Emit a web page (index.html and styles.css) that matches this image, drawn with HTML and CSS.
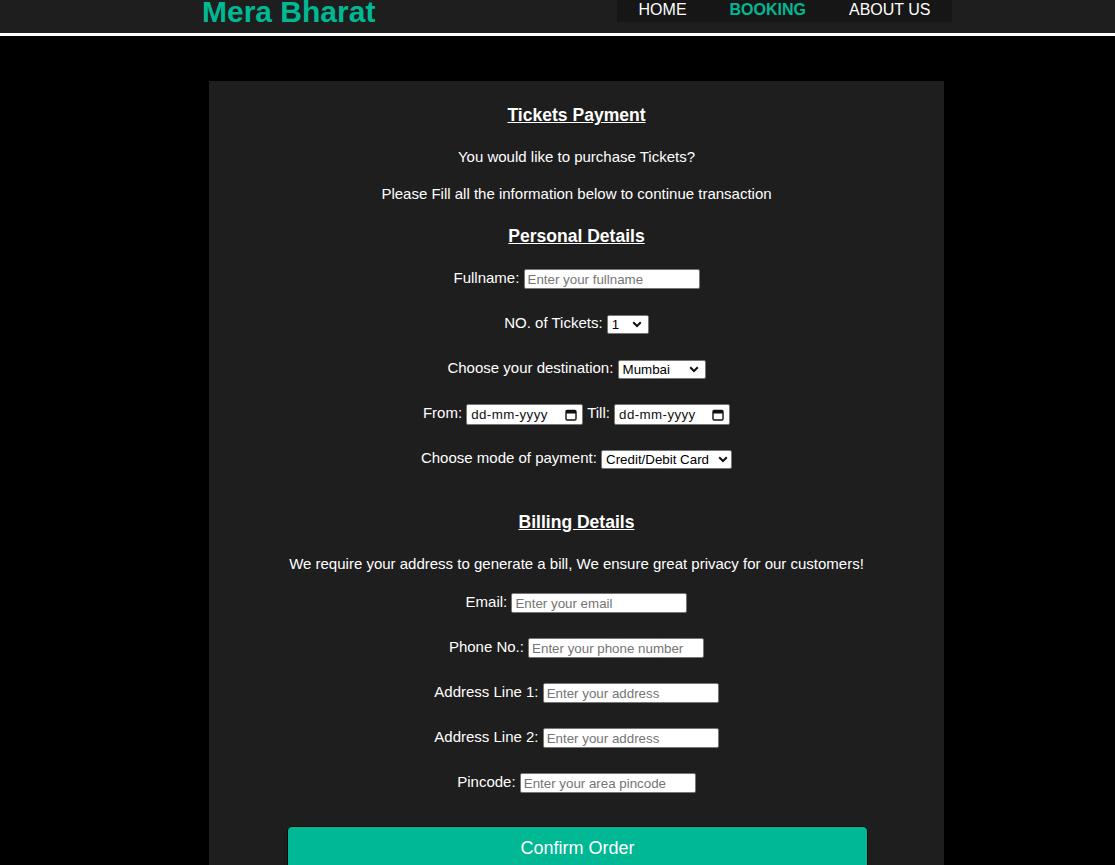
FILE: index.html
```html
<!DOCTYPE html>
<html lang="en">
<head>
<meta charset="utf-8">
<title>Mera Bharat - Booking</title>
<link rel="stylesheet" href="styles.css">
</head>
<body>
<header class="site-header">
  <div class="header-inner">
    <h1 class="logo">Mera Bharat</h1>
    <nav class="nav">
      <a class="nav-link" href="#">HOME</a>
      <a class="nav-link active" href="#">BOOKING</a>
      <a class="nav-link" href="#">ABOUT US</a>
    </nav>
  </div>
</header>

<main class="card">
  <h3 class="heading first">Tickets Payment</h3>
  <p class="text t1">You would like to purchase Tickets?</p>
  <p class="text t2">Please Fill all the information below to continue transaction</p>

  <h3 class="heading personal">Personal Details</h3>
  <div class="row r-first">Fullname: <input class="field" type="text" placeholder="Enter your fullname"></div>
  <div class="row">NO. of Tickets: <span class="sel-wrap"><select class="sel sel-num"><option>1</option><option>2</option><option>3</option><option>4</option></select><svg class="chev" width="10" height="7" viewBox="0 0 10 7"><path d="M1.2 1.3 L5 5 L8.8 1.3" fill="none" stroke="#111" stroke-width="2"/></svg></span></div>
  <div class="row">Choose your destination: <span class="sel-wrap"><select class="sel sel-dest"><option>Mumbai</option><option>Delhi</option><option>Goa</option></select><svg class="chev" width="10" height="7" viewBox="0 0 10 7"><path d="M1.2 1.3 L5 5 L8.8 1.3" fill="none" stroke="#111" stroke-width="2"/></svg></span></div>
  <div class="row">From: <span class="date"><input class="date-text" type="text" placeholder="dd-mm-yyyy"><svg class="cal" width="12" height="13" viewBox="0 0 12 13"><rect x="1" y="2.5" width="10" height="9.5" rx="1.2" fill="none" stroke="#111" stroke-width="1.4"/><rect x="1" y="2.5" width="10" height="3" fill="#111"/></svg></span> Till: <span class="date date-b"><input class="date-text" type="text" placeholder="dd-mm-yyyy"><svg class="cal" width="12" height="13" viewBox="0 0 12 13"><rect x="1" y="2.5" width="10" height="9.5" rx="1.2" fill="none" stroke="#111" stroke-width="1.4"/><rect x="1" y="2.5" width="10" height="3" fill="#111"/></svg></span></div>
  <div class="row">Choose mode of payment: <span class="sel-wrap"><select class="sel sel-pay"><option>Credit/Debit Card</option><option>UPI</option><option>Net Banking</option></select><svg class="chev chev-pay" width="10" height="7" viewBox="0 0 10 7"><path d="M1.2 1.3 L5 5 L8.8 1.3" fill="none" stroke="#111" stroke-width="2"/></svg></span></div>

  <h3 class="heading billing">Billing Details</h3>
  <p class="text t3">We require your address to generate a bill, We ensure great privacy for our customers!</p>
  <div class="row r-email">Email: <input class="field" type="email" placeholder="Enter your email"></div>
  <div class="row">Phone No.: <input class="field" type="text" placeholder="Enter your phone number"></div>
  <div class="row">Address Line 1: <input class="field" type="text" placeholder="Enter your address"></div>
  <div class="row">Address Line 2: <input class="field" type="text" placeholder="Enter your address"></div>
  <div class="row">Pincode: <input class="field" type="text" placeholder="Enter your area pincode"></div>

  <button class="confirm" type="button">Confirm Order</button>
</main>
</body>
</html>
```

FILE: styles.css
```css
* { box-sizing: border-box; }

html, body {
  margin: 0;
  padding: 0;
  background: #000;
  font-family: "Liberation Sans", Arial, sans-serif;
  color: #fff;
}

.site-header {
  background: #1e1e1e;
  height: 36px;
  border-bottom: 3px solid #fff;
}

.header-inner {
  display: flex;
  justify-content: space-between;
  align-items: flex-start;
  width: 750px;
  margin-left: 202px;
  height: 33px;
}

.logo {
  margin: -3px 0 0 0;
  font-size: 30px;
  line-height: 30px;
  font-weight: bold;
  color: #00b894;
}

.nav {
  display: flex;
  background: #161616;
  height: 22px;
}

.nav-link {
  display: block;
  font-size: 16px;
  line-height: 18px;
  padding: 1px 21.5px 3px;
  color: #fff;
  text-decoration: none;
}

.nav-link.active {
  color: #00b894;
  font-weight: bold;
}

.card {
  display: block;
  width: 735px;
  margin: 45px 0 0 209px;
  background: #1e1e1e;
  padding: 0 0 40px;
  text-align: center;
  font-size: 15px;
}

.heading {
  margin: 0;
  font-size: 17.55px;
  line-height: 20px;
  font-weight: bold;
  text-decoration: underline;
}

.heading.first { padding-top: 24px; }
.heading.personal { margin-top: 24px; }
.heading.billing { margin-top: 42px; }

.text {
  margin: 0;
  line-height: 17px;
}

.t1 { margin-top: 23px; }
.t2 { margin-top: 20px; }
.t3 { margin-top: 23px; }

.row {
  height: 24px;
  line-height: 24px;
  margin-top: 21px;
  white-space: nowrap;
}

.row.r-first { margin-top: 20px; }
.row.r-email { margin-top: 18px; }

.field {
  width: 176px;
  height: 20px;
  padding: 1px 3px;
  border: 1px solid #767676;
  border-radius: 2px;
  background: #fff;
  font-family: "Liberation Sans", Arial, sans-serif;
  font-size: 13.33px;
  color: #000;
  vertical-align: middle;
}

.field::placeholder { color: #757575; }

.sel-wrap {
  position: relative;
  display: inline-block;
  vertical-align: middle;
  line-height: 0;
}

.sel {
  -webkit-appearance: none;
  appearance: none;
  height: 19px;
  border: 1px solid #767676;
  border-radius: 2px;
  background: #fff;
  color: #000;
  font-family: "Liberation Sans", Arial, sans-serif;
  font-size: 13.33px;
  line-height: 17px;
  padding: 0 16px 0 4px;
  margin: 0;
}

.sel-num { width: 42px; }
.sel-dest { width: 88px; }
.sel-pay { width: 131px; padding-right: 12px; }

.chev {
  position: absolute;
  right: 7px;
  top: 6px;
  pointer-events: none;
}

.chev-pay { right: 4px; }

.date {
  display: inline-flex;
  align-items: center;
  justify-content: space-between;
  width: 117px;
  height: 21px;
  padding: 0 5px 0 4px;
  border: 1px solid #767676;
  border-radius: 2px;
  background: #fff;
  vertical-align: middle;
}

.date-b { width: 116px; }

.date-text {
  width: 82px;
  height: 17px;
  border: 0;
  padding: 0;
  margin: 0;
  outline: none;
  background: transparent;
  font-family: "Liberation Sans", Arial, sans-serif;
  font-size: 13.33px;
  letter-spacing: 0.4px;
  color: #000;
}

.date-text::placeholder { color: #111; }

.cal { display: block; flex: none; }

.confirm {
  display: block;
  width: 581px;
  height: 44px;
  margin: 32px 0 0 78px;
  background: #00b894;
  color: #fff;
  border: 1px solid #0a0a0a;
  border-radius: 5px;
  font-family: "Liberation Sans", Arial, sans-serif;
  font-size: 18px;
  cursor: pointer;
}
```
